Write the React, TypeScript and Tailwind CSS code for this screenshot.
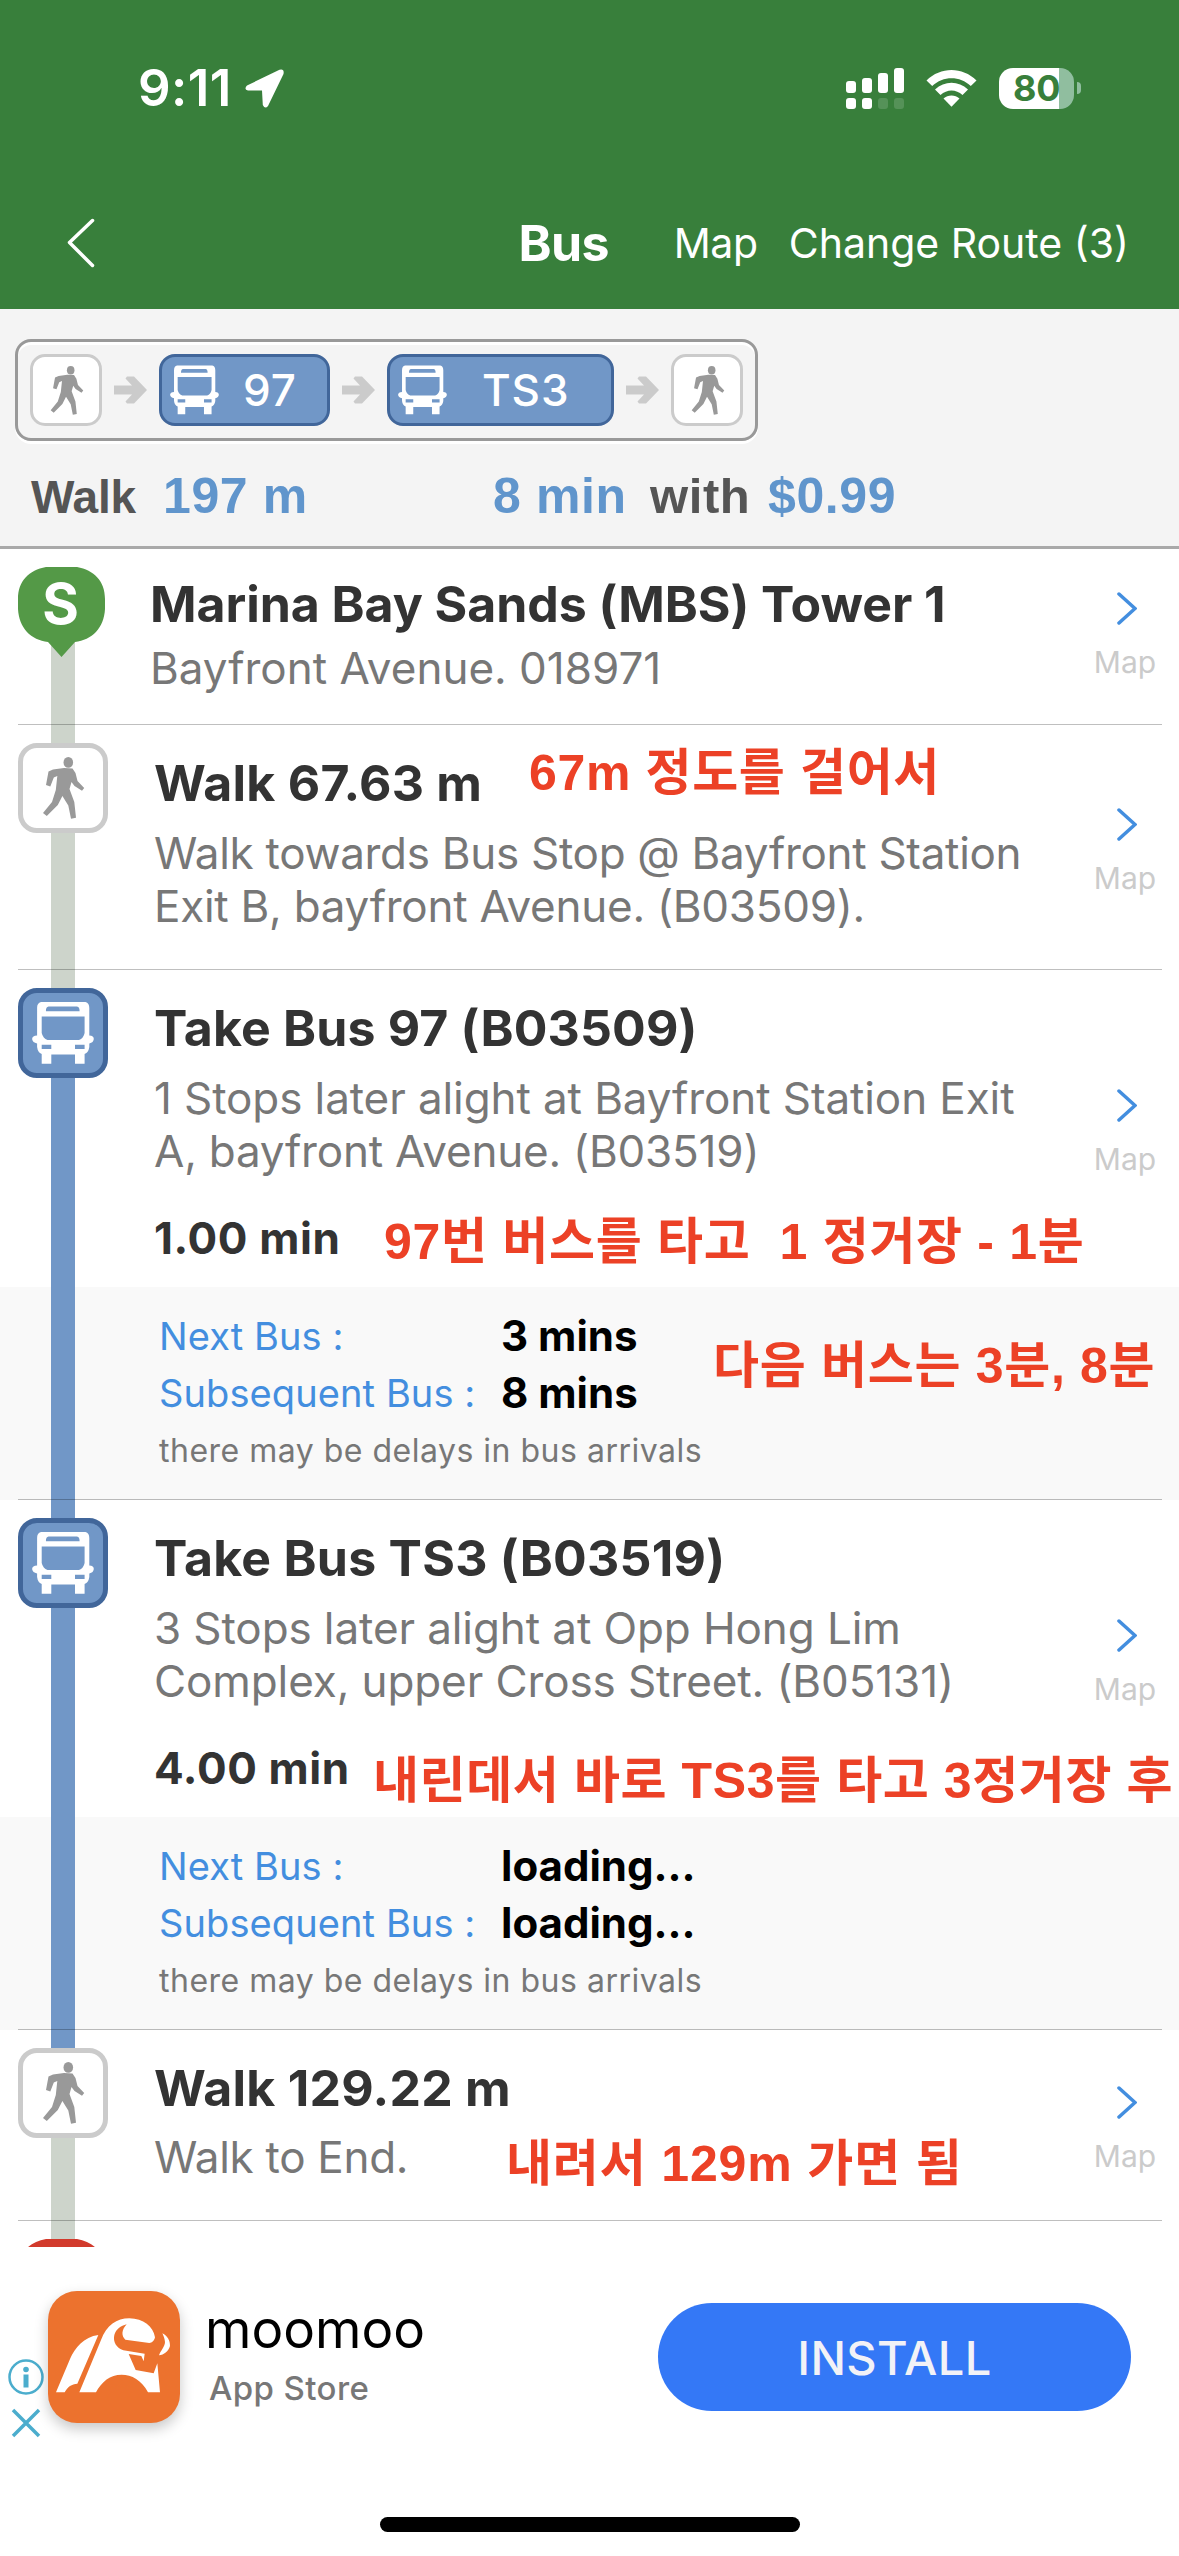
import type { ReactNode } from 'react'

function WalkGlyph({ className }: { className?: string }) {
  return (
    <svg viewBox="14 14 62 62" className={className} fill="#999">
      <ellipse cx="50.3" cy="19.4" rx="4.8" ry="5.4" />
      <path d="M46 25L54.5 25.5L57.5 30L59.5 38L66.2 45L64 47.8L56.5 43L53.5 39L51.5 46L56.3 59L58 74.8L53 75.8L50.3 62.5L44.4 53L39.8 62L28.8 73L25 70L34 59L37.8 47L39.3 33L35.8 34.5L32.3 43.5L28 42L30.5 28.5L35 26.5Z" />
    </svg>
  )
}

function BusGlyph({ className }: { className?: string }) {
  return (
    <svg viewBox="14 14 62 62" className={className} fill="#fff" fillRule="evenodd">
      <path d="M23 14H67.5Q71.3 15 71.3 20V47.4Q75.8 47.5 75.8 51Q75.5 54.5 71.3 55.5V59Q70.5 64.5 66.6 66V75.8H57V66.4H33.3V75.8H23.7V66Q19.8 64.5 19.1 59V55.5Q14.5 54.5 14.1 51Q14.3 47.5 19.1 47.4V20Q19 15 23 14ZM30.5 18.5Q27.9 18.8 27.9 23.3H61.6Q61.6 18.8 59 18.5ZM23.7 28.5V45Q25 50.5 29.5 51.9H61Q65.5 50.5 66.6 45V28.5ZM23.7 56.7V60.9H33.3V56.7ZM57 56.7V60.9H66.6V56.7Z" />
    </svg>
  )
}

function WalkIcon() {
  return (
    <div className="flex size-[90px] items-center justify-center rounded-[19px] border-[5px] border-[#cbcbcb] bg-white">
      <WalkGlyph className="size-[62px]" />
    </div>
  )
}

function BusIcon() {
  return (
    <div className="flex size-[90px] items-center justify-center rounded-[19px] border-[5px] border-[#41669a] bg-[#7197c7]">
      <BusGlyph className="size-[62px]" />
    </div>
  )
}

function Pin({ label, color }: { label?: string; color: string }) {
  return (
    <div className="relative h-[90px] w-[87px]">
      <svg viewBox="0 0 87 90" className="absolute inset-0" fill={color}>
        <path d="M28 0H59C76 3 87 14 87 32V42C86 61 74 73 57 75L43.5 90L30 75C13 73 1 61 0 42V32C0 14 11 3 28 0Z" />
      </svg>
      {label && (
        <span className="relative block pr-0.5 text-center text-[56px] leading-[74px] font-bold text-white">{label}</span>
      )}
    </div>
  )
}

function StepArrow() {
  return (
    <svg viewBox="0 0 33 28" className="h-7 w-[33px]" fill="#cbcbcb">
      <path d="M0 9.5H18L11.5 2.5L13 0.5H20L33 14L20 27.5H13L11.5 25.5L18 18.5H0Z" />
    </svg>
  )
}

function WalkChip() {
  return (
    <div className="flex size-[72px] items-center justify-center rounded-[15px] border-[3px] border-[#cbcbcb] bg-white">
      <WalkGlyph className="size-[49px]" />
    </div>
  )
}

function BusChip({ children, className }: { children: ReactNode; className: string }) {
  return (
    <div
      className={`flex h-[72px] items-center rounded-[16px] border-[3px] border-[#41669a] bg-[#7197c7] pl-2 text-[44px] font-medium tracking-[0.9px] text-white ${className}`}
    >
      <BusGlyph className="h-[50px] w-[49px]" />
      {children}
    </div>
  )
}

function MapLink({ className = 'pt-[9px]' }: { className?: string }) {
  return (
    <a href="#" className={`mr-[6px] flex w-[96px] shrink-0 flex-col items-center justify-center self-stretch ${className}`}>
      <svg viewBox="0 0 20 33" className="ml-1 h-[33px] w-5" fill="none" stroke="#438edf" strokeWidth="3.5" strokeLinecap="round">
        <path d="M2 2L18 16.5L2 31" />
      </svg>
      <span className="mt-[19px] text-[30px] leading-9 text-[#cbcbcb]">Map</span>
    </a>
  )
}

function Rail({ className }: { className: string }) {
  return <div className={`absolute left-[51px] w-6 ${className}`} />
}

function Divider() {
  return <div className="absolute right-[17px] bottom-0 left-[18px] h-px bg-black/25" />
}

// Red notes laid over the itinerary
function Note({ children, className }: { children: ReactNode; className: string }) {
  return (
    <p
      className={`absolute z-10 font-['Liberation_Sans','Noto_Sans_CJK_KR',sans-serif] text-[50px] leading-[60px] font-bold whitespace-pre text-[#ec4126] ${className}`}
    >
      {children}
    </p>
  )
}

function Title({ children, className = 'tracking-[0.15px]' }: { children: ReactNode; className?: string }) {
  return <h2 className={`text-[50px] leading-[60px] font-bold whitespace-nowrap text-[#333] ${className}`}>{children}</h2>
}

function Line({ children, className = 'tracking-[-0.15px]' }: { children: ReactNode; className?: string }) {
  return <p className={`text-[44px] leading-[53px] whitespace-nowrap text-[#777] ${className}`}>{children}</p>
}

function Duration({ children }: { children: ReactNode }) {
  return <p className="mt-[34px] text-[44px] leading-[53px] font-bold tracking-[0.6px] text-[#333]">{children}</p>
}

function Arrivals({ next, subsequent }: { next: string; subsequent: string }) {
  return (
    <div className="h-[213px] bg-[#f9f9f9] pt-[21px] pl-[159px]">
      <dl className="grid grid-cols-[342px_auto] text-[38px] leading-[57px]">
        <dt className="tracking-[0.1px] text-[#438edf]">Next Bus :</dt>
        <dd className="-mt-px text-[42px] font-bold text-black">{next}</dd>
        <dt className="tracking-[0.1px] text-[#438edf]">Subsequent Bus :</dt>
        <dd className="-mt-px text-[42px] font-bold text-black">{subsequent}</dd>
      </dl>
      <p className="mt-1 text-[32px] leading-[50px] tracking-[0.5px] text-[#777]">there may be delays in bus arrivals</p>
    </div>
  )
}

function StatusBar() {
  return (
    <div className="flex h-[176px] items-center pr-[98px] pl-[138px]">
      <span className="text-[51px] font-semibold tracking-[0.4px]">9:11</span>
      <svg viewBox="0 0 39 39" className="ml-[13px] size-[39px]" fill="currentColor">
        <path d="M34.5 0.8L2 16.5Q-1.5 20.5 3 21.5H17L17.8 36Q20 40.5 23 37L38.5 5Q39.5 -0.5 34.5 0.8Z" />
      </svg>
      <svg viewBox="0 0 58 41" className="ml-auto h-[41px] w-[58px]" fill="currentColor">
        <rect x="0" y="13" width="10" height="12" rx="3" />
        <rect x="16" y="10" width="10" height="15" rx="3" />
        <rect x="32" y="5" width="10" height="20" rx="3" />
        <rect x="48" y="0" width="10" height="25" rx="3" />
        <rect x="0" y="30" width="10" height="11" rx="3" />
        <rect x="16" y="30" width="10" height="11" rx="3" />
        <rect x="32" y="30" width="10" height="11" rx="3" opacity="0.15" />
        <rect x="48" y="30" width="10" height="11" rx="3" opacity="0.15" />
      </svg>
      <svg viewBox="0 0 51 37" className="ml-[22px] h-[37px] w-[51px]" fill="currentColor">
        <path d="M0.5 10.5C14.5 -3.5 36.5 -3.5 50.5 10.5L44.8 16C34 5.5 17 5.5 6.2 16Z" />
        <path d="M9 19.5C18.5 10.5 32.5 10.5 42 19.5L36.5 25C30 19 21 19 14.5 25Z" />
        <path d="M17.5 28.5C22 24.5 29 24.5 33.5 28.5L25.5 36.8Z" />
      </svg>
      <div className="ml-[22px] flex h-[41px] w-[75px] items-center rounded-[14px] bg-[linear-gradient(to_right,#fff_60px,#90be9f_60px)] pl-[14px]">
        <span className="text-[36px] font-bold tracking-[-0.3px] text-[#387f3b]">80</span>
      </div>
      <div className="ml-[3px] h-[12px] w-1 rounded-r-full bg-[#90be9f]" />
    </div>
  )
}

function NavBar() {
  return (
    <nav className="flex h-[133px] items-center pr-[50px] pl-[67px] whitespace-nowrap">
      <svg viewBox="0 0 28 50" className="h-[50px] w-7" fill="none" stroke="currentColor" strokeWidth="3.5" strokeLinecap="round" strokeLinejoin="round">
        <path d="M25.5 2.5L2.5 24.5L25.5 47.5" />
      </svg>
      <h1 className="mt-0.5 ml-auto text-[50px] font-bold tracking-[-0.7px]">Bus</h1>
      <a href="#" className="mt-0.5 ml-[65px] text-[41px] tracking-[-0.4px]">
        Map
      </a>
      <a href="#" className="mt-0.5 ml-[31px] text-[41px]">
        Change Route (3)
      </a>
    </nav>
  )
}

export default function App() {
  return (
    <div className="flex h-[2556px] w-[1179px] flex-col overflow-hidden bg-white font-['Inter',sans-serif]">
      <header className="h-[309px] shrink-0 bg-[#387f3b] text-white">
        <StatusBar />
        <NavBar />
      </header>

      {/* Route summary */}
      <section className="h-[240px] shrink-0 border-b-[3px] border-[#a9a9a9] bg-[#f4f4f4] pt-[30px]">
        <div className="ml-[15px] flex h-[102px] w-[743px] items-center justify-between rounded-[16px] border-[3px] border-[#999] px-3 shadow-[0_3px_0_#fff,inset_0_3px_0_#fff]">
          <WalkChip />
          <StepArrow />
          <BusChip className="w-[171px]">
            <span className="ml-[24px]">97</span>
          </BusChip>
          <StepArrow />
          <BusChip className="w-[227px]">
            <span className="ml-[35px]">TS3</span>
          </BusChip>
          <StepArrow />
          <WalkChip />
        </div>
        <div className="mt-[25px] grid grid-cols-[132px_330px_157px_118px_auto] items-baseline pl-[31px] font-['Liberation_Sans',sans-serif] text-[50px] leading-[60px] font-bold tracking-[0.6px] text-[#6095cc]">
          <span className="text-[46px] tracking-[-0.2px] text-[#555]">Walk</span>
          <span>197 m</span>
          <span>8 min</span>
          <span className="text-[49px] text-[#555]">with</span>
          <span>$0.99</span>
        </div>
      </section>

      {/* Itinerary */}
      <main className="h-[1698px] shrink-0 overflow-hidden">
        <section className="relative flex h-[176px]">
          <Rail className="top-[90px] bottom-0 bg-[#cdd4cb]" />
          <div className="w-[150px] shrink-0 pt-[18px] pl-[18px]">
            <Pin label="S" color="#549947" />
          </div>
          <div className="flex-1 pt-[25px]">
            <Title className="tracking-[-0.05px]">Marina Bay Sands (MBS) Tower 1</Title>
            <Line className="mt-2">Bayfront Avenue. 018971</Line>
          </div>
          <MapLink className="pb-[3px]" />
          <Divider />
        </section>

        <section className="relative flex h-[245px]">
          <Rail className="inset-y-0 bg-[#cdd4cb]" />
          <div className="relative w-[154px] shrink-0 pt-[18px] pl-[18px]">
            <WalkIcon />
          </div>
          <div className="flex-1 pt-[28px]">
            <Title className="tracking-[0.25px]">Walk 67.63 m</Title>
            <Line className="mt-[14px] tracking-[-0.3px]">Walk towards Bus Stop @ Bayfront Station</Line>
            <Line className="tracking-[-0.26px]">Exit B, bayfront Avenue. (B03509).</Line>
          </div>
          <MapLink />
          <Note className="top-[18px] left-[529px] tracking-[0.65px]">67m 정도를 걸어서</Note>
          <Divider />
        </section>

        <section className="relative h-[530px]">
          <div className="flex h-[317px]">
            <div className="relative z-10 w-[154px] shrink-0 pt-[18px] pl-[18px]">
              <BusIcon />
            </div>
            <div className="flex-1 pt-[28px]">
              <Title>Take Bus 97 (B03509)</Title>
              <Line className="mt-[14px] tracking-[-0.1px]">1 Stops later alight at Bayfront Station Exit</Line>
              <Line className="tracking-[-0.2px]">A, bayfront Avenue. (B03519)</Line>
              <Duration>1.00 min</Duration>
            </div>
            <MapLink />
          </div>
          <Arrivals next="3 mins" subsequent="8 mins" />
          <Rail className="top-0 h-10 bg-[#cdd4cb]" />
          <Rail className="top-10 bottom-0 bg-[#7197c7]" />
          <Note className="top-[242px] left-[384px] tracking-[0.7px]">97번 버스를 타고  1 정거장 - 1분</Note>
          <Note className="top-[366px] left-[713px] tracking-[0.7px]">다음 버스는 3분, 8분</Note>
          <Divider />
        </section>

        <section className="relative h-[530px]">
          <div className="flex h-[317px]">
            <div className="relative z-10 w-[154px] shrink-0 pt-[18px] pl-[18px]">
              <BusIcon />
            </div>
            <div className="flex-1 pt-[28px]">
              <Title className="tracking-[0.25px]">Take Bus TS3 (B03519)</Title>
              <Line className="mt-[14px] tracking-[-0.1px]">3 Stops later alight at Opp Hong Lim</Line>
              <Line className="tracking-[-0.1px]">Complex, upper Cross Street. (B05131)</Line>
              <Duration>4.00 min</Duration>
            </div>
            <MapLink />
          </div>
          <Arrivals next="loading..." subsequent="loading..." />
          <Rail className="inset-y-0 bg-[#7197c7]" />
          <Note className="top-[251px] left-[373px] tracking-[0.6px]">내린데서 바로 TS3를 타고 3정거장 후</Note>
          <Divider />
        </section>

        <section className="relative flex h-[191px]">
          <Rail className="top-0 h-10 bg-[#7197c7]" />
          <Rail className="top-10 bottom-0 bg-[#cdd4cb]" />
          <div className="relative w-[154px] shrink-0 pt-[18px] pl-[18px]">
            <WalkIcon />
          </div>
          <div className="flex-1 pt-[28px]">
            <Title className="tracking-[0.25px]">Walk 129.22 m</Title>
            <Line className="mt-[13px] tracking-[-0.3px]">Walk to End.</Line>
          </div>
          <MapLink />
          <Note className="top-[104px] left-[506px] tracking-[0.85px]">내려서 129m 가면 됨</Note>
          <Divider />
        </section>

        <section className="relative h-[120px] pt-[18px] pl-[18px]">
          <Rail className="top-0 h-10 bg-[#cdd4cb]" />
          <Pin color="#d23a2c" />
        </section>
      </main>

      {/* Ad banner */}
      <footer className="flex flex-1 flex-col">
        <div className="flex h-[220px] items-start pt-11 pr-12">
          <div className="mt-[68px] flex w-12 shrink-0 flex-col items-center gap-[13px] pl-[3px]">
            <svg viewBox="0 0 36 36" className="size-9" fill="#4badcd">
              <circle cx="18" cy="18" r="16.5" fill="none" stroke="#4badcd" strokeWidth="2.5" />
              <circle cx="18" cy="10.5" r="2.8" />
              <rect x="15.5" y="15.5" width="5" height="13" />
            </svg>
            <svg viewBox="0 0 30 30" className="size-[30px]" stroke="#4badcd" strokeWidth="3.5">
              <path d="M2 2L28 28M28 2L2 28" />
            </svg>
          </div>
          <div className="size-[132px] shrink-0 overflow-hidden rounded-[29px] bg-[#ec722e] shadow-[0_6px_14px_rgba(0,0,0,0.22)]">
            <svg viewBox="144 213 396 396" className="size-full" fill="#fff">
              <path d="M295 345C252 350 224 385 211 415L168 517H194C203 500 215 492 232 491Z" />
              <path d="M380 313C364 330 364 348 376 359L448 369C456 369 463 362 465 352C460 320 430 295 388 295C350 295 320 315 303 360L238 517H288C305 485 330 464 365 464C395 464 425 480 444 517H480L472 430L461 460L407 450L386 402L424 408L431 424L434 401L370 391C350 385 338 365 343 345C348 328 362 318 380 313Z" />
              <path d="M487 340C502 348 511 362 510 378C505 395 492 404 477 406C480 395 495 380 495 366C494 355 490 347 487 340Z" />
            </svg>
          </div>
          <div className="pt-[6px] pl-[25px]">
            <p className="text-[53px] leading-[64px] text-black">moomoo</p>
            <p className="mt-[7px] pl-1 text-[33px] leading-10 font-medium tracking-[0.4px] text-[#777]">App Store</p>
          </div>
          <button className="mt-3 ml-auto h-[108px] w-[473px] rounded-full bg-[#3478f6] pt-0.5 text-[47px] font-medium tracking-[0.4px] text-[#f2f2f7]">
            INSTALL
          </button>
        </div>
        <div className="mx-auto mt-[50px] h-[15px] w-[420px] rounded-full bg-black" />
      </footer>
    </div>
  )
}
